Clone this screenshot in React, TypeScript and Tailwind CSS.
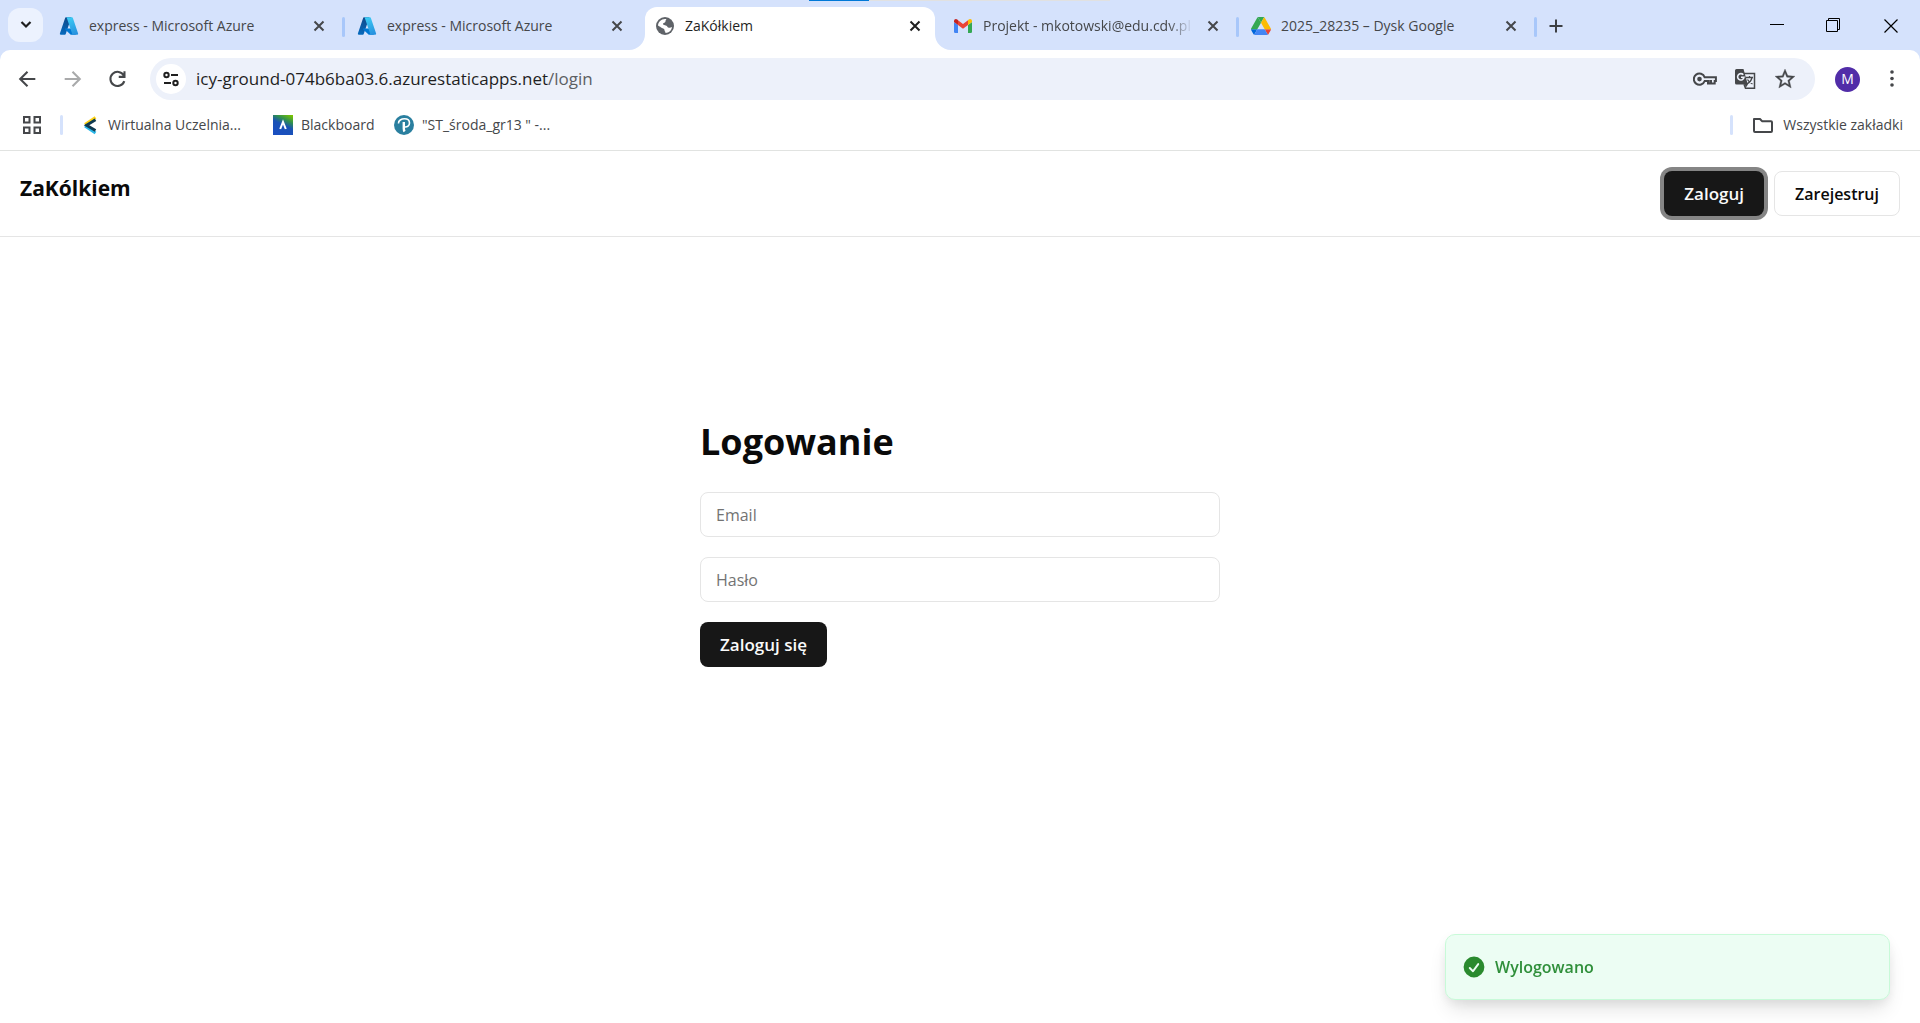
import React, { useState } from 'react';

const AzureIcon = () => (
  <svg viewBox="0 0 96 96" className="size-5 shrink-0" aria-hidden="true">
    <defs>
      <linearGradient id="az1" x1="0.6" y1="0" x2="0.3" y2="1">
        <stop offset="0" stopColor="#114a8b" />
        <stop offset="1" stopColor="#0669bc" />
      </linearGradient>
      <linearGradient id="az2" x1="0.3" y1="0" x2="0.6" y2="1">
        <stop offset="0" stopColor="#3ccbf4" />
        <stop offset="1" stopColor="#2892df" />
      </linearGradient>
    </defs>
    <path fill="url(#az1)" d="M33.338 6.544h26.038l-27.03 80.087a4.152 4.152 0 0 1-3.933 2.824H8.149a4.145 4.145 0 0 1-3.928-5.47L29.404 9.368a4.152 4.152 0 0 1 3.934-2.825z" />
    <path fill="#0078d4" d="M71.175 60.261h-41.29a1.911 1.911 0 0 0-1.305 3.309l26.532 24.764a4.171 4.171 0 0 0 2.846 1.121h23.38z" />
    <path fill="url(#az2)" d="M66.595 9.364a4.145 4.145 0 0 0-3.928-2.82H33.648a4.146 4.146 0 0 1 3.928 2.82l25.184 74.62a4.146 4.146 0 0 1-3.928 5.472h29.02a4.146 4.146 0 0 0 3.927-5.472z" />
  </svg>
);

const GlobeIcon = () => (
  <svg viewBox="0 0 20 20" className="size-5 shrink-0" aria-hidden="true">
    <circle cx="10" cy="10" r="9" fill="#5f6368" />
    <path fill="#fff" d="M3 9.500C3.200 6 6 3.200 10 3c1 0 1.200.1 1.500.2C10.300 4 10.800 5 10.300 6 9.800 7 8 6.800 8 8c0 1.500 3.800.8 4.500 3 .5 1.500 3.500.5 4.500 0-.5 3.500-3 5.800-6.500 6 0-1.500-1-1.500-1-3S7 12.500 6 11.500C5 10.500 4 10.200 3 9.500z" />
  </svg>
);

const GmailIcon = () => (
  <svg viewBox="0 0 20 20" className="size-5 shrink-0" aria-hidden="true">
    <path fill="#4285f4" d="M1 6l4 3v8H2.300A1.300 1.300 0 0 1 1 15.700z" />
    <path fill="#34a853" d="M15 9l4-3v9.700a1.300 1.300 0 0 1-1.300 1.300H15z" />
    <path fill="#ea4335" d="M5 4.200l5 3.800 5-3.800V9l-5 3.800L5 9z" />
    <path fill="#c5221f" d="M1 5c0-1.900 2-2.700 3.300-1.500L5 4.200V9L1 6z" />
    <path fill="#fbbc04" d="M19 5c0-1.900-2-2.700-3.300-1.500l-.7.7V9l4-3z" />
  </svg>
);

const DriveIcon = () => (
  <svg viewBox="0 0 87.3 78" className="size-5 shrink-0" aria-hidden="true">
    <path fill="#0066da" d="m6.600 66.850 3.850 6.650c.8 1.400 1.950 2.500 3.300 3.300l13.750-23.800h-27.500c0 1.550.4 3.100 1.200 4.500z" />
    <path fill="#34a853" d="m43.650 25-13.750-23.800c-1.350.8-2.500 1.900-3.300 3.300l-25.400 44a9.060 9.060 0 0 0-1.200 4.500h27.500z" />
    <path fill="#ea4335" d="m73.550 76.800c1.350-.8 2.500-1.900 3.300-3.300l1.600-2.750 7.650-13.250c.8-1.400 1.200-2.950 1.200-4.500h-27.502l5.852 11.500z" />
    <path fill="#34a853" d="m43.650 25 13.750-23.800c-1.350-.8-2.900-1.200-4.500-1.200h-18.500c-1.600 0-3.150.45-4.500 1.200z" />
    <path fill="#4285f4" d="m59.800 53h-32.300l-13.750 23.800c1.350.8 2.900 1.200 4.500 1.200h50.800c1.600 0 3.150-.45 4.500-1.200z" />
    <path fill="#fbbc04" d="m73.400 26.500-12.700-22c-.8-1.400-1.950-2.500-3.300-3.300l-13.750 23.800 16.150 28h27.450c0-1.550-.4-3.100-1.200-4.500z" />
  </svg>
);

const CloseIcon = () => (
  <svg viewBox="0 0 20 20" className="size-5" fill="none" stroke="currentColor" strokeWidth="2" aria-hidden="true">
    <path d="M5.500 5.500l9 9M14.500 5.500l-9 9" />
  </svg>
);

type TabData = { title: string; icon: React.ReactNode; active?: boolean; divider?: boolean; fade?: boolean };

const tabs: TabData[] = [
  { title: 'express - Microsoft Azure', icon: <AzureIcon />, divider: true },
  { title: 'express - Microsoft Azure', icon: <AzureIcon /> },
  { title: 'ZaKółkiem', icon: <GlobeIcon />, active: true },
  { title: 'Projekt - mkotowski@edu.cdv.pl', icon: <GmailIcon />, divider: true, fade: true },
  { title: '2025_28235 – Dysk Google', icon: <DriveIcon />, divider: true },
];

function Tab({ tab }: { tab: TabData }) {
  return (
    <div className="flex w-[298px] min-w-0 items-stretch">
      <div
        className={
          tab.active
            ? 'relative flex min-w-0 flex-1 items-center rounded-t-xl bg-white px-2.5 pb-1.5 text-[#1f1f1f]'
            : 'relative flex min-w-0 flex-1 items-center px-2.5 pb-1.5 text-[#45474a]'
        }
      >
        {tab.active && (
          <>
            <svg viewBox="0 0 16 16" className="absolute -left-4 bottom-0 size-4" aria-hidden="true">
              <path fill="#fff" d="M16 0v16H0A16 16 0 0 0 16 0z" />
            </svg>
            <svg viewBox="0 0 16 16" className="absolute -right-4 bottom-0 size-4" aria-hidden="true">
              <path fill="#fff" d="M0 0v16h16A16 16 0 0 1 0 0z" />
            </svg>
          </>
        )}
        {tab.icon}
        <span
          className={
            tab.fade
              ? 'ml-2.5 min-w-0 flex-1 overflow-hidden whitespace-nowrap [mask-image:linear-gradient(to_right,black_88%,transparent)]'
              : 'ml-2.5 min-w-0 flex-1 overflow-hidden whitespace-nowrap'
          }
        >
          {tab.title}
        </span>
        <button type="button" aria-label={`Zamknij ${tab.title}`} className="ml-2.5">
          <CloseIcon />
        </button>
      </div>
      <div className="flex w-2 items-center justify-center pb-1">
        {tab.divider && <span className="h-5 w-[3px] rounded-full bg-[#a8c7fa]" />}
      </div>
    </div>
  );
}

function TabStrip() {
  return (
    <div className="relative flex h-[50px] items-stretch bg-[#d5e2fc] pt-[7px] text-sm">
      <div className="absolute left-[809px] top-0 flex h-px w-[301px] bg-[#e1e1e1]">
        <span className="w-[60px] bg-[#0078d7]" />
      </div>
      <div className="flex w-[49px] shrink-0 items-start pl-2 pt-px">
        <button type="button" aria-label="Wyszukaj karty" className="flex h-[34px] w-[35px] items-center justify-center rounded-xl bg-[#ecf2fe] text-[#1f1f1f]">
          <svg viewBox="0 0 20 20" className="size-5" fill="none" stroke="currentColor" strokeWidth="2.200" aria-hidden="true">
            <path d="M5.500 7l4.500 4.500L14.500 7" />
          </svg>
        </button>
      </div>
      {tabs.map((tab, i) => (
        <Tab key={i} tab={tab} />
      ))}
      <button type="button" aria-label="Nowa karta" className="flex w-[34px] items-center justify-center pb-1.5 text-[#3c3f43]">
        <svg viewBox="0 0 20 20" className="size-5" fill="none" stroke="currentColor" strokeWidth="2" aria-hidden="true">
          <path d="M10 3.500v13M3.500 10h13" />
        </svg>
      </button>
      <div className="ml-auto flex text-black">
        <button type="button" aria-label="Minimalizuj" className="flex w-14 items-center justify-center pb-2">
          <svg viewBox="0 0 14 14" className="size-3.5" stroke="currentColor" aria-hidden="true">
            <path d="M0 6.500h14" />
          </svg>
        </button>
        <button type="button" aria-label="Przywróć" className="flex w-14 items-center justify-center pb-2">
          <svg viewBox="0 0 14 14" className="size-3.5" fill="none" stroke="currentColor" aria-hidden="true">
            <path d="M.5 2.500h11v11H.5zM2.500 2.500v-2h11v11h-2" />
          </svg>
        </button>
        <button type="button" aria-label="Zamknij" className="flex w-[59px] items-center justify-center pb-1.5">
          <svg viewBox="0 0 14 14" className="size-3.5" fill="none" stroke="currentColor" strokeWidth="1.200" aria-hidden="true">
            <path d="M.5.5l13 13M13.500.5l-13 13" />
          </svg>
        </button>
      </div>
    </div>
  );
}

function AddressBar() {
  const [url, setUrl] = useState('icy-ground-074b6ba03.6.azurestaticapps.net/login');
  const slash = url.indexOf('/');
  const host = slash < 0 ? url : url.slice(0, slash);
  const path = slash < 0 ? '' : url.slice(slash);
  return (
    <div className="flex h-[42px] min-w-0 flex-1 items-center rounded-full bg-[#edf1fa] pl-1.5 pr-[18px] text-[#45474a]">
      <button type="button" aria-label="Informacje o witrynie" className="flex size-[30px] items-center justify-center rounded-full bg-white text-[#1f1f1f]">
        <svg viewBox="0 0 20 20" className="size-5" fill="none" stroke="currentColor" strokeWidth="2" aria-hidden="true">
          <circle cx="5.500" cy="6" r="2.200" />
          <path d="M10 6h7M3 14h7" />
          <circle cx="14.500" cy="14" r="2.200" />
        </svg>
      </button>
      <div className="relative ml-2.5 min-w-0 flex-1 text-[17px] leading-6">
        <div aria-hidden="true" className="whitespace-pre">
          <span className="text-[#1f1f1f]">{host}</span>
          <span className="text-[#5c5f63]">{path}</span>
        </div>
        <input
          type="text"
          aria-label="Pasek adresu"
          value={url}
          onChange={(e) => setUrl(e.target.value)}
          className="absolute inset-0 w-full bg-transparent text-transparent caret-black outline-none"
        />
      </div>
      <div className="flex items-center gap-4">
        <button type="button" aria-label="Hasła">
          <svg viewBox="0 0 24 24" className="size-6" fill="none" stroke="currentColor" strokeWidth="2" aria-hidden="true">
            <path d="M11.700 10.300A5.600 5.600 0 1 0 11.700 14H15v2.500h2.200V14H18v2.500h3.700V14h1.200v-3.700z" />
            <circle cx="6.500" cy="12.100" r="2.300" fill="currentColor" stroke="none" />
          </svg>
        </button>
        <button type="button" aria-label="Przetłumacz tę stronę">
          <svg viewBox="0 0 24 24" className="size-6" fill="none" stroke="currentColor" strokeWidth="1.500" aria-hidden="true">
            <path d="M11 6.500h10.500v14.700H12.500l-1.500-4" />
            <path strokeWidth="1.300" d="M13 10.500h7M16.500 9v1.500M19 10.500c-.6 3-2.500 5-5 6.300M14.500 12.500c1 2 3 3.500 5 4.500" />
            <path fill="currentColor" stroke="none" d="M3.500 2h7l4.300 15.500H3.500A1.500 1.500 0 0 1 2 16V3.500A1.500 1.500 0 0 1 3.500 2zM12 17.500h3L12.500 21z" />
            <path stroke="#edf1fa" strokeWidth="1.600" d="M10.300 7.800A3.200 3.200 0 1 0 11 10.200H8" />
          </svg>
        </button>
        <button type="button" aria-label="Dodaj do zakładek">
          <svg viewBox="0 0 24 24" className="size-6" fill="currentColor" stroke="currentColor" strokeWidth="0.3" aria-hidden="true">
            <path d="M22 9.240l-7.190-.62L12 2 9.190 8.630 2 9.240l5.460 4.730L5.820 21 12 17.270 18.180 21l-1.630-7.030L22 9.240zM12 15.400l-3.760 2.270 1-4.280-3.320-2.880 4.380-.38L12 6.100l1.710 4.040 4.380.38-3.320 2.880 1 4.280L12 15.400z" />
          </svg>
        </button>
      </div>
    </div>
  );
}

function Toolbar() {
  return (
    <div className="bg-[#d5e2fc]">
      <div className="flex items-center rounded-t-[10px] bg-white pb-px pl-[15px] pr-4 pt-2 text-[#45474a]">
        <div className="flex w-[135px] shrink-0 gap-5">
          <button type="button" aria-label="Wstecz">
            <svg viewBox="0 0 24 24" className="size-[25px]" fill="none" stroke="currentColor" strokeWidth="2" aria-hidden="true">
              <path d="M19.500 11.500H5.500M12 4.500l-7 7 7 7" />
            </svg>
          </button>
          <button type="button" aria-label="Dalej" className="text-[#a9aaab]">
            <svg viewBox="0 0 24 24" className="size-[25px]" fill="none" stroke="currentColor" strokeWidth="2" aria-hidden="true">
              <path d="M4.500 11.500h14M12 4.500l7 7-7 7" />
            </svg>
          </button>
          <button type="button" aria-label="Odśwież">
            <svg viewBox="0 0 24 24" className="size-[25px]" fill="none" stroke="currentColor" strokeWidth="2" aria-hidden="true">
              <path d="M18.500 13.500A6.800 6.800 0 1 1 18 8.200M18.700 4v5.500h-5.500" />
            </svg>
          </button>
        </div>
        <AddressBar />
        <button type="button" aria-label="Profil" className="ml-5 flex size-[25px] items-center justify-center rounded-full bg-[#512da8] text-sm text-white">
          M
        </button>
        <button type="button" aria-label="Więcej" className="ml-5">
          <svg viewBox="0 0 24 24" className="size-6" fill="currentColor" aria-hidden="true">
            <circle cx="12" cy="5" r="1.800" />
            <circle cx="12" cy="11.500" r="1.800" />
            <circle cx="12" cy="18" r="1.800" />
          </svg>
        </button>
      </div>
    </div>
  );
}

const UczelniaIcon = () => (
  <svg viewBox="0 0 20 20" className="size-5 shrink-0" fill="none" aria-hidden="true">
    <path stroke="#29b6e8" strokeWidth="3" d="M15.500 18L5 11" />
    <path stroke="#fcd116" strokeWidth="3" d="M15.500 2.500L5 9.500" />
    <path stroke="#0f3a50" strokeWidth="2.800" d="M15.500 4.800L6.500 10.300l9 5.200" />
  </svg>
);

const BlackboardIcon = () => (
  <svg viewBox="0 0 20 20" className="size-5 shrink-0" aria-hidden="true">
    <defs>
      <linearGradient id="bb" x1="0.9" y1="0" x2="0.400" y2="1">
        <stop offset="0" stopColor="#7ac400" />
        <stop offset="0.300" stopColor="#2f9050" />
        <stop offset="0.550" stopColor="#1a52b5" />
        <stop offset="1" stopColor="#1a4fc0" />
      </linearGradient>
    </defs>
    <path fill="url(#bb)" d="M0 0h20v20H0z" />
    <path fill="none" stroke="#fff" strokeWidth="2" d="M7.200 14l2.800-7 2.800 7" />
  </svg>
);

const PearsonIcon = () => (
  <svg viewBox="0 0 20 20" className="size-5 shrink-0" fill="none" aria-hidden="true">
    <circle cx="10" cy="10" r="10" fill="#2a7f9f" />
    <path stroke="#fff" strokeWidth="1.600" d="M4.500 8.500C4.200 5.500 7.500 3.800 10.500 3.800c3 0 5 1.700 5 4.200 0 2.800-2.300 4.200-4.700 4" />
    <path stroke="#fff" strokeWidth="2.400" d="M9.800 7v6.500c0 1.500.1 2 .8 3" />
  </svg>
);

function BookmarksBar() {
  return (
    <nav aria-label="Zakładki" className="flex h-[50px] items-center border-b border-[#e1e3e1] bg-white pb-0.5 pl-[22px] pr-[17px] text-sm text-[#45474a]">
      <button type="button" aria-label="Aplikacje">
        <svg viewBox="0 0 20 20" className="size-5" fill="none" stroke="currentColor" strokeWidth="2" aria-hidden="true">
          <path d="M2 2h5.500v5.500H2zM12.500 2H18v5.500h-5.500zM2 12.500h5.500V18H2zM12.500 12.500H18V18h-5.500z" />
        </svg>
      </button>
      <span className="ml-[18px] mr-[17px] h-5 w-[3px] rounded-full bg-[#d5e2fc]" />
      <a href="#uczelnia" className="flex w-[193px] items-center gap-2 whitespace-nowrap">
        <UczelniaIcon />
        Wirtualna Uczelnia...
      </a>
      <a href="#blackboard" className="flex w-[121px] items-center gap-2 whitespace-nowrap">
        <BlackboardIcon />
        Blackboard
      </a>
      <a href="#sroda" className="flex items-center gap-2 whitespace-nowrap">
        <PearsonIcon />
        &quot;ST_środa_gr13 &quot; -...
      </a>
      <span className="ml-auto mr-[18px] h-5 w-[3px] rounded-full bg-[#d5e2fc]" />
      <button type="button" className="flex items-center gap-2 whitespace-nowrap">
        <svg viewBox="0 0 24 24" className="size-6" fill="none" stroke="currentColor" strokeWidth="2" strokeLinejoin="round" aria-hidden="true">
          <path d="M3 6h6l2 2.200h9a1 1 0 0 1 1 1V18a1 1 0 0 1-1 1H4a1 1 0 0 1-1-1z" />
        </svg>
        Wszystkie zakładki
      </button>
    </nav>
  );
}

export default function App() {
  return (
    <div className="flex min-h-screen flex-col overflow-hidden bg-white font-['Open_Sans',sans-serif] text-[#0a0a0a]">
      <TabStrip />
      <Toolbar />
      <BookmarksBar />
      <header className="flex items-start justify-between border-b border-[#e5e5e5] p-5">
        <h2 className="text-[21px] font-bold leading-[35px]">ZaKólkiem</h2>
        <div className="flex gap-2.5">
          <button type="button" className="h-[45px] rounded-lg bg-[#171717] px-5 text-[17px] font-semibold text-[#fafafa] ring-4 ring-[#858585]">
            Zaloguj
          </button>
          <button type="button" className="h-[45px] rounded-lg border border-[#e5e5e5] bg-white px-5 text-base font-semibold">
            Zarejestruj
          </button>
        </div>
      </header>
      <main className="px-5 pt-[181px]">
        <form className="mx-auto flex w-full max-w-[520px] flex-col items-start gap-5" onSubmit={(e) => e.preventDefault()}>
          <h1 className="mb-1.5 text-[36px] font-bold leading-[48px]">Logowanie</h1>
          <input
            type="email"
            aria-label="Email"
            placeholder="Email"
            className="h-[45px] w-full rounded-lg border border-[#e5e5e5] px-[15px] text-base placeholder:text-[#737373]"
          />
          <input
            type="password"
            aria-label="Hasło"
            placeholder="Hasło"
            className="h-[45px] w-full rounded-lg border border-[#e5e5e5] px-[15px] text-base placeholder:text-[#737373]"
          />
          <button type="submit" className="h-[45px] rounded-lg bg-[#171717] px-5 text-[17px] font-semibold text-[#fafafa]">
            Zaloguj się
          </button>
        </form>
      </main>
      <div role="status" className="fixed bottom-[23px] right-[30px] flex h-[66px] w-[445px] items-center gap-2 rounded-[10px] border border-[#c8fad8] bg-[#ecfdf3] px-[15px] text-base font-semibold text-[#2f8f3a] shadow-[0_12px_20px_-4px_rgba(0,0,0,0.12),0_4px_12px_rgba(0,0,0,0.06)]">
        <svg viewBox="0 0 20 20" className="size-[26px]" fill="#2a8a2e" aria-hidden="true">
          <path fillRule="evenodd" clipRule="evenodd" d="M10 18a8 8 0 100-16 8 8 0 000 16zm3.857-9.809a.75.75 0 00-1.214-.882l-3.483 4.790-1.880-1.880a.75.75 0 10-1.060 1.061l2.500 2.500a.75.75 0 001.137-.089l4-5.500z" />
        </svg>
        Wylogowano
      </div>
    </div>
  );
}
